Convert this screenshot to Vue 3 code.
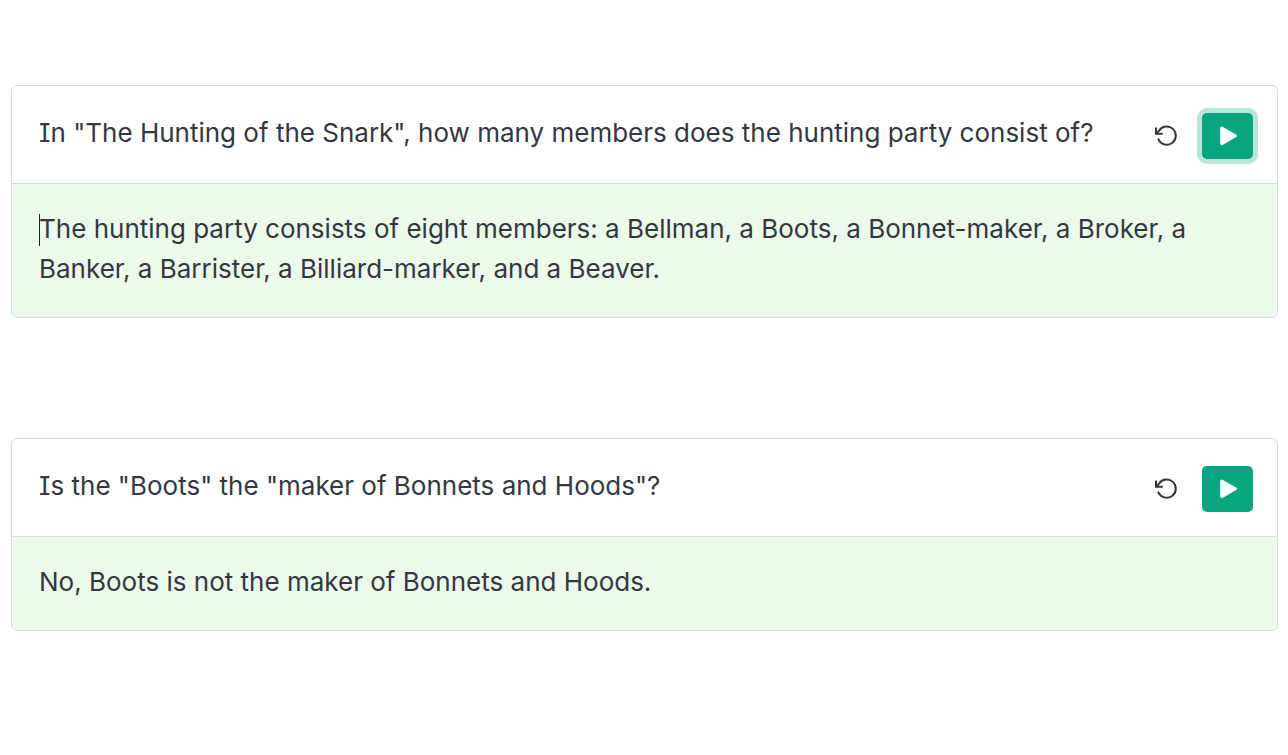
<script setup>
const cells = [
  {
    id: 'party',
    question: 'In "The Hunting of the Snark", how many members does the hunting party consist of?',
    answer:
      'The hunting party consists of eight members: a Bellman, a Boots, a Bonnet-maker, a Broker, a Banker, a Barrister, a Billiard-marker, and a Beaver.',
    active: true,
  },
  {
    id: 'boots',
    question: 'Is the "Boots" the "maker of Bonnets and Hoods"?',
    answer: 'No, Boots is not the maker of Bonnets and Hoods.',
    active: false,
  },
]
</script>

<template>
  <main class="page">
    <article v-for="cell in cells" :key="cell.id" class="card">
      <header class="prompt">
        <h2 class="question">{{ cell.question }}</h2>
        <div class="actions">
          <button type="button" class="reset" aria-label="Reset">
            <svg viewBox="0 0 24 24" width="24" height="24" aria-hidden="true">
              <path d="M2 4.2v5.6h6" />
              <path d="M2.6 9.2L4.9 6.9A9.1 9.1 0 1 1 4.4 15.3" />
            </svg>
          </button>
          <button type="button" class="run" :class="{ active: cell.active }" aria-label="Run">
            <svg viewBox="0 0 18 20" width="18" height="20" aria-hidden="true">
              <path d="M2.7 2v15.6l13.7-7.8z" />
            </svg>
          </button>
        </div>
      </header>
      <p class="answer"><span v-if="cell.active" class="caret"></span>{{ cell.answer }}</p>
    </article>
  </main>
</template>

<style>
body {
  margin: 0;
  background: #fff;
}
</style>

<style scoped>
.page {
  display: flex;
  flex-direction: column;
  gap: 120px;
  padding: 85px 10px 85px 11px;
  color: #353740;
  font-family: Inter, "Liberation Sans", sans-serif;
  font-size: 26px;
  line-height: 40px;
  font-feature-settings: "cv08";
}

.card {
  border: 1px solid #d9d9e3;
  border-radius: 6px;
  overflow: hidden;
}

.prompt {
  display: flex;
  align-items: flex-start;
  justify-content: space-between;
  gap: 24px;
  padding: 27px 24px 24px 27px;
  border-bottom: 1px solid #d9d9e3;
}

.question {
  flex: 1;
  margin: 0;
  font-size: inherit;
  font-weight: 400;
}

.actions {
  display: flex;
  align-items: center;
  gap: 24px;
}

button {
  display: flex;
  align-items: center;
  justify-content: center;
  padding: 0;
  border: 0;
  cursor: pointer;
}

.reset {
  background: none;
}

.reset path {
  fill: none;
  stroke: #353740;
  stroke-width: 2;
  stroke-linecap: round;
  stroke-linejoin: miter;
}

.run {
  width: 51px;
  height: 46px;
  border-radius: 5px;
  background: #08a680;
}

.run path {
  fill: #fff;
  stroke: #fff;
  stroke-width: 3;
  stroke-linejoin: round;
}

.run.active {
  box-shadow: 0 0 0 5px #b9e5da;
}

.answer {
  position: relative;
  margin: 0;
  padding: 25px 27px 28px;
  background: #ebfaeb;
}

.caret {
  position: absolute;
  top: 30px;
  left: 27px;
  width: 1px;
  height: 32px;
  background: #202123;
}
</style>
